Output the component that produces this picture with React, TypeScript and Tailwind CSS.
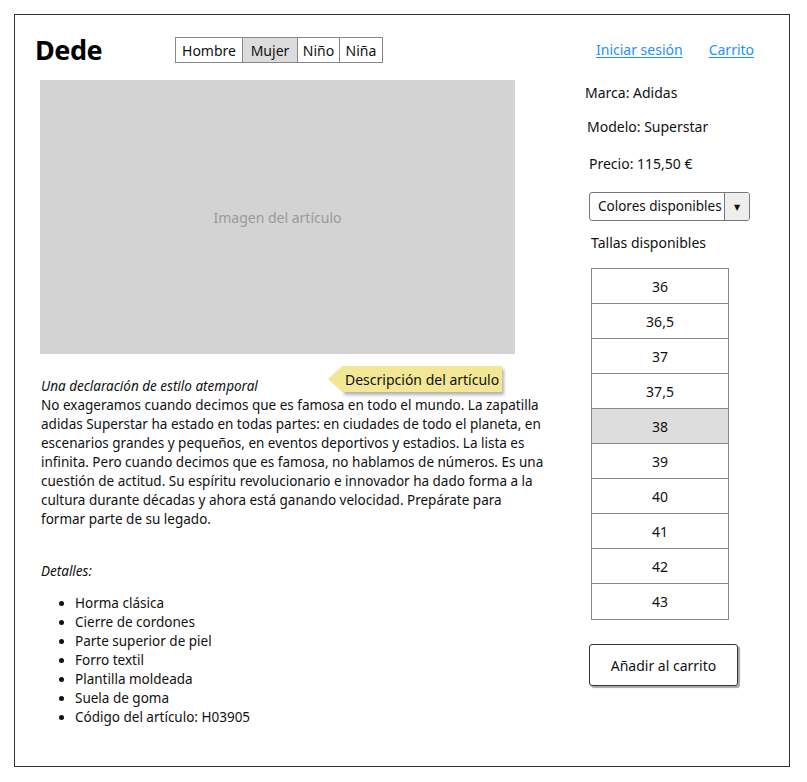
import React from "react";

const font = { fontFamily: '"Noto Sans", "DejaVu Sans", sans-serif' };

const paragraph = [
  "No exageramos cuando decimos que es famosa en todo el mundo. La zapatilla",
  "adidas Superstar ha estado en todas partes: en ciudades de todo el planeta, en",
  "escenarios grandes y pequeños, en eventos deportivos y estadios. La lista es",
  "infinita. Pero cuando decimos que es famosa, no hablamos de números. Es una",
  "cuestión de actitud. Su espíritu revolucionario e innovador ha dado forma a la",
  "cultura durante décadas y ahora está ganando velocidad. Prepárate para",
  "formar parte de su legado.",
];

const details = [
  "Horma clásica",
  "Cierre de cordones",
  "Parte superior de piel",
  "Forro textil",
  "Plantilla moldeada",
  "Suela de goma",
  "Código del artículo: H03905",
];

const sizes = ["36", "36,5", "37", "37,5", "38", "39", "40", "41", "42", "43"];

export default function App() {
  return (
    <div className="w-[807px] h-[782px] bg-white text-[#111] pt-[14px] pl-[14px]" style={font}>
      <div className="w-[776px] h-[753px] border border-[#333] relative">
        {/* Header */}
        <div className="flex items-center h-[26px] mt-[22px]">
          <div className="ml-[20px] w-[140px] text-[27px] font-bold leading-none tracking-[-0.5px] text-black -mt-[2px]">
            Dede
          </div>
          <div className="flex h-[26px] border border-[#888] text-[14px]">
            <div className="w-[67px] flex items-center justify-center border-r border-[#888]">Hombre</div>
            <div className="w-[55px] flex items-center justify-center border-r border-[#888] bg-[#dcdcdc]">Mujer</div>
            <div className="w-[42px] flex items-center justify-center border-r border-[#888]">Niño</div>
            <div className="w-[42px] flex items-center justify-center">Niña</div>
          </div>
          <div className="flex ml-[213px] text-[14px] text-[#1e90ff] -mt-[2px]">
            <a className="underline underline-offset-2">Iniciar sesión</a>
            <a className="underline underline-offset-2 ml-[26px]">Carrito</a>
          </div>
        </div>

        {/* Body */}
        <div className="flex mt-[17px]">
          {/* Left column */}
          <div className="ml-[25px] w-[525px] shrink-0 relative">
            <div className="w-[475px] h-[274px] bg-[#d3d3d3] flex items-center justify-center text-[14px] text-[#9a9a9a]">
              Imagen del artículo
            </div>
            <div className="mt-[23px] ml-[1px] text-[13.5px] leading-[19px]">
              <div className="italic">Una declaración de estilo atemporal</div>
              {paragraph.map((l) => (
                <div key={l} className="whitespace-nowrap">{l}</div>
              ))}
              <div className="italic mt-[33px]">Detalles:</div>
              <ul className="mt-[13px] pl-[34px] list-disc">
                {details.map((d) => (
                  <li key={d}>{d}</li>
                ))}
              </ul>
            </div>
            {/* Tooltip */}
            <div className="absolute left-[288px] top-[286px] flex items-center">
              <div className="w-0 h-0 border-y-[13px] border-y-transparent border-r-[14px] border-r-[#f3e795]" />
              <div className="h-[26px] px-[3px] bg-[#f3e795] flex items-center text-[14px] shadow-[2px_3px_3px_rgba(0,0,0,0.3)] whitespace-nowrap">
                Descripción del artículo
              </div>
            </div>
          </div>

          {/* Right column */}
          <div className="ml-[20px] shrink-0 flex flex-col text-[14px] leading-[19px]">
            <div className="mt-[3px]">Marca: Adidas</div>
            <div className="mt-[15px] ml-[2px]">Modelo: Superstar</div>
            <div className="mt-[18px] ml-[4px]">Precio: 115,50 €</div>
            <div className="mt-[19px] ml-[4px] w-[161px] h-[29px] border border-[#777] rounded-[3px] flex overflow-hidden">
              <div className="flex-1 flex items-center pl-[8px] whitespace-nowrap text-[13.5px]">Colores disponibles</div>
              <div className="w-[25px] border-l border-[#777] bg-[#eeeeee] flex items-center justify-center text-[8px]">▼</div>
            </div>
            <div className="mt-[12px] ml-[6px]">Tallas disponibles</div>
            <div className="mt-[16px] ml-[6px] w-[138px] border border-[#888]">
              {sizes.map((s, i) => (
                <div
                  key={s}
                  className={
                    "h-[35px] flex items-center justify-center " +
                    (i < sizes.length - 1 ? "border-b border-[#888] " : "h-[34px] ") +
                    (s === "38" ? "bg-[#dddddd]" : "bg-white")
                  }
                >
                  {s}
                </div>
              ))}
            </div>
            <div className="mt-[24px] ml-[4px] w-[149px] h-[42px] border border-[#333] rounded-[3px] flex items-center justify-center shadow-[2px_2px_1px_rgba(0,0,0,0.35)]">
              Añadir al carrito
            </div>
          </div>
        </div>
      </div>
    </div>
  );
}
